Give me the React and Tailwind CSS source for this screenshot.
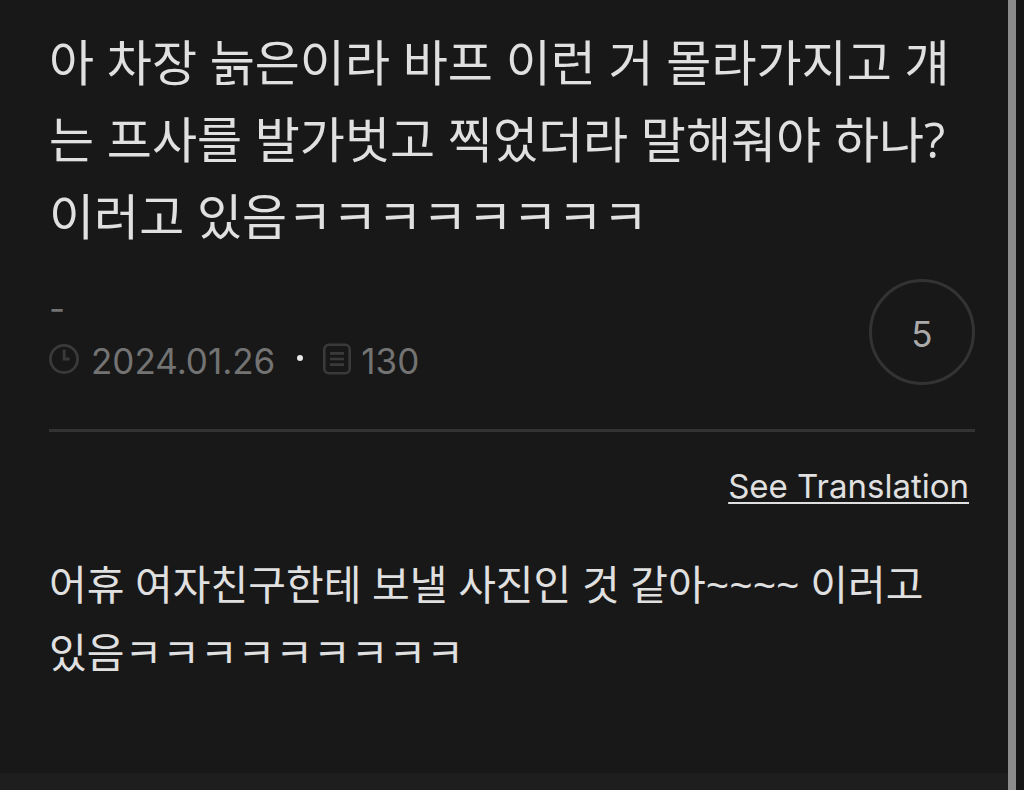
function ClockIcon() {
  return (
    <svg className="mb-1.5 h-8 w-[30px] shrink-0" viewBox="0 0 30 32" fill="none" stroke="#3a3a3a" strokeWidth="2.8" aria-hidden="true">
      <circle cx="15" cy="16" r="13.6" />
      <path d="M15.2 6.5v9.5h5.4" />
    </svg>
  );
}

function DocumentIcon() {
  return (
    <svg className="mb-1.5 h-8 w-7 shrink-0" viewBox="0 0 28 32" fill="none" stroke="#3a3a3a" strokeWidth="2.6" aria-hidden="true">
      <rect x="1.3" y="1.8" width="25.4" height="28.4" rx="4.5" />
      <path d="M7 10.4h14M7 16h14M7 21.6h14" />
    </svg>
  );
}

export default function App() {
  return (
    <div className="flex min-h-screen bg-[#181818] font-['Inter','Noto_Sans_CJK_KR',sans-serif] text-[#e0e0e0]">
      <div className="flex min-w-0 flex-1 flex-col">
        <main className="flex-1 pt-6 pr-[33px] pl-[49px]">
          <h1 className="font-['Open_Sans','Noto_Sans_CJK_KR',sans-serif] text-[49px] leading-[77px] font-normal break-all">
            아 차장 늙은이라 바프 이런 거 몰라가지고 걔는 프사를 발가벗고 찍었더라 말해줘야 하나? 이러고 있음ㅋㅋㅋㅋㅋㅋㅋㅋ
          </h1>
          <div className="mt-[21px] flex items-center justify-between border-b-3 border-[#333333] pb-[41px]">
            <div className="pt-1.5 text-[35px] leading-[53px] text-[#737373]">
              <p>-</p>
              <div className="flex items-center">
                <ClockIcon />
                <time dateTime="2024-01-26" className="ml-3">2024.01.26</time>
                <span className="mr-5 ml-[22px] mb-2 size-[6px] rounded-full bg-[#e8e8e8]" />
                <DocumentIcon />
                <span className="ml-2.5">130</span>
              </div>
            </div>
            <button type="button" className="size-[106px] rounded-full border-3 border-[#333333] pt-1 text-[35px] text-[#aaaaaa]">5</button>
          </div>
          <div className="mt-7 flex justify-end pr-1.5">
            <button type="button" className="text-[33px] leading-[52px] underline decoration-2 underline-offset-4">See Translation</button>
          </div>
          <p className="mt-[38px] font-['Open_Sans','Noto_Sans_CJK_KR',sans-serif] text-[41px] leading-[68px] break-keep">
            어휴 여자친구한테 보낼 사진인 것 같아~~~~ 이러고 있음ㅋㅋㅋㅋㅋㅋㅋㅋㅋ
          </p>
        </main>
        <footer className="h-[17px] bg-[#1e1e1e]" />
      </div>
      <div className="w-4 border-l-8 border-[#8b8b8b] bg-[#151515]" />
    </div>
  );
}
